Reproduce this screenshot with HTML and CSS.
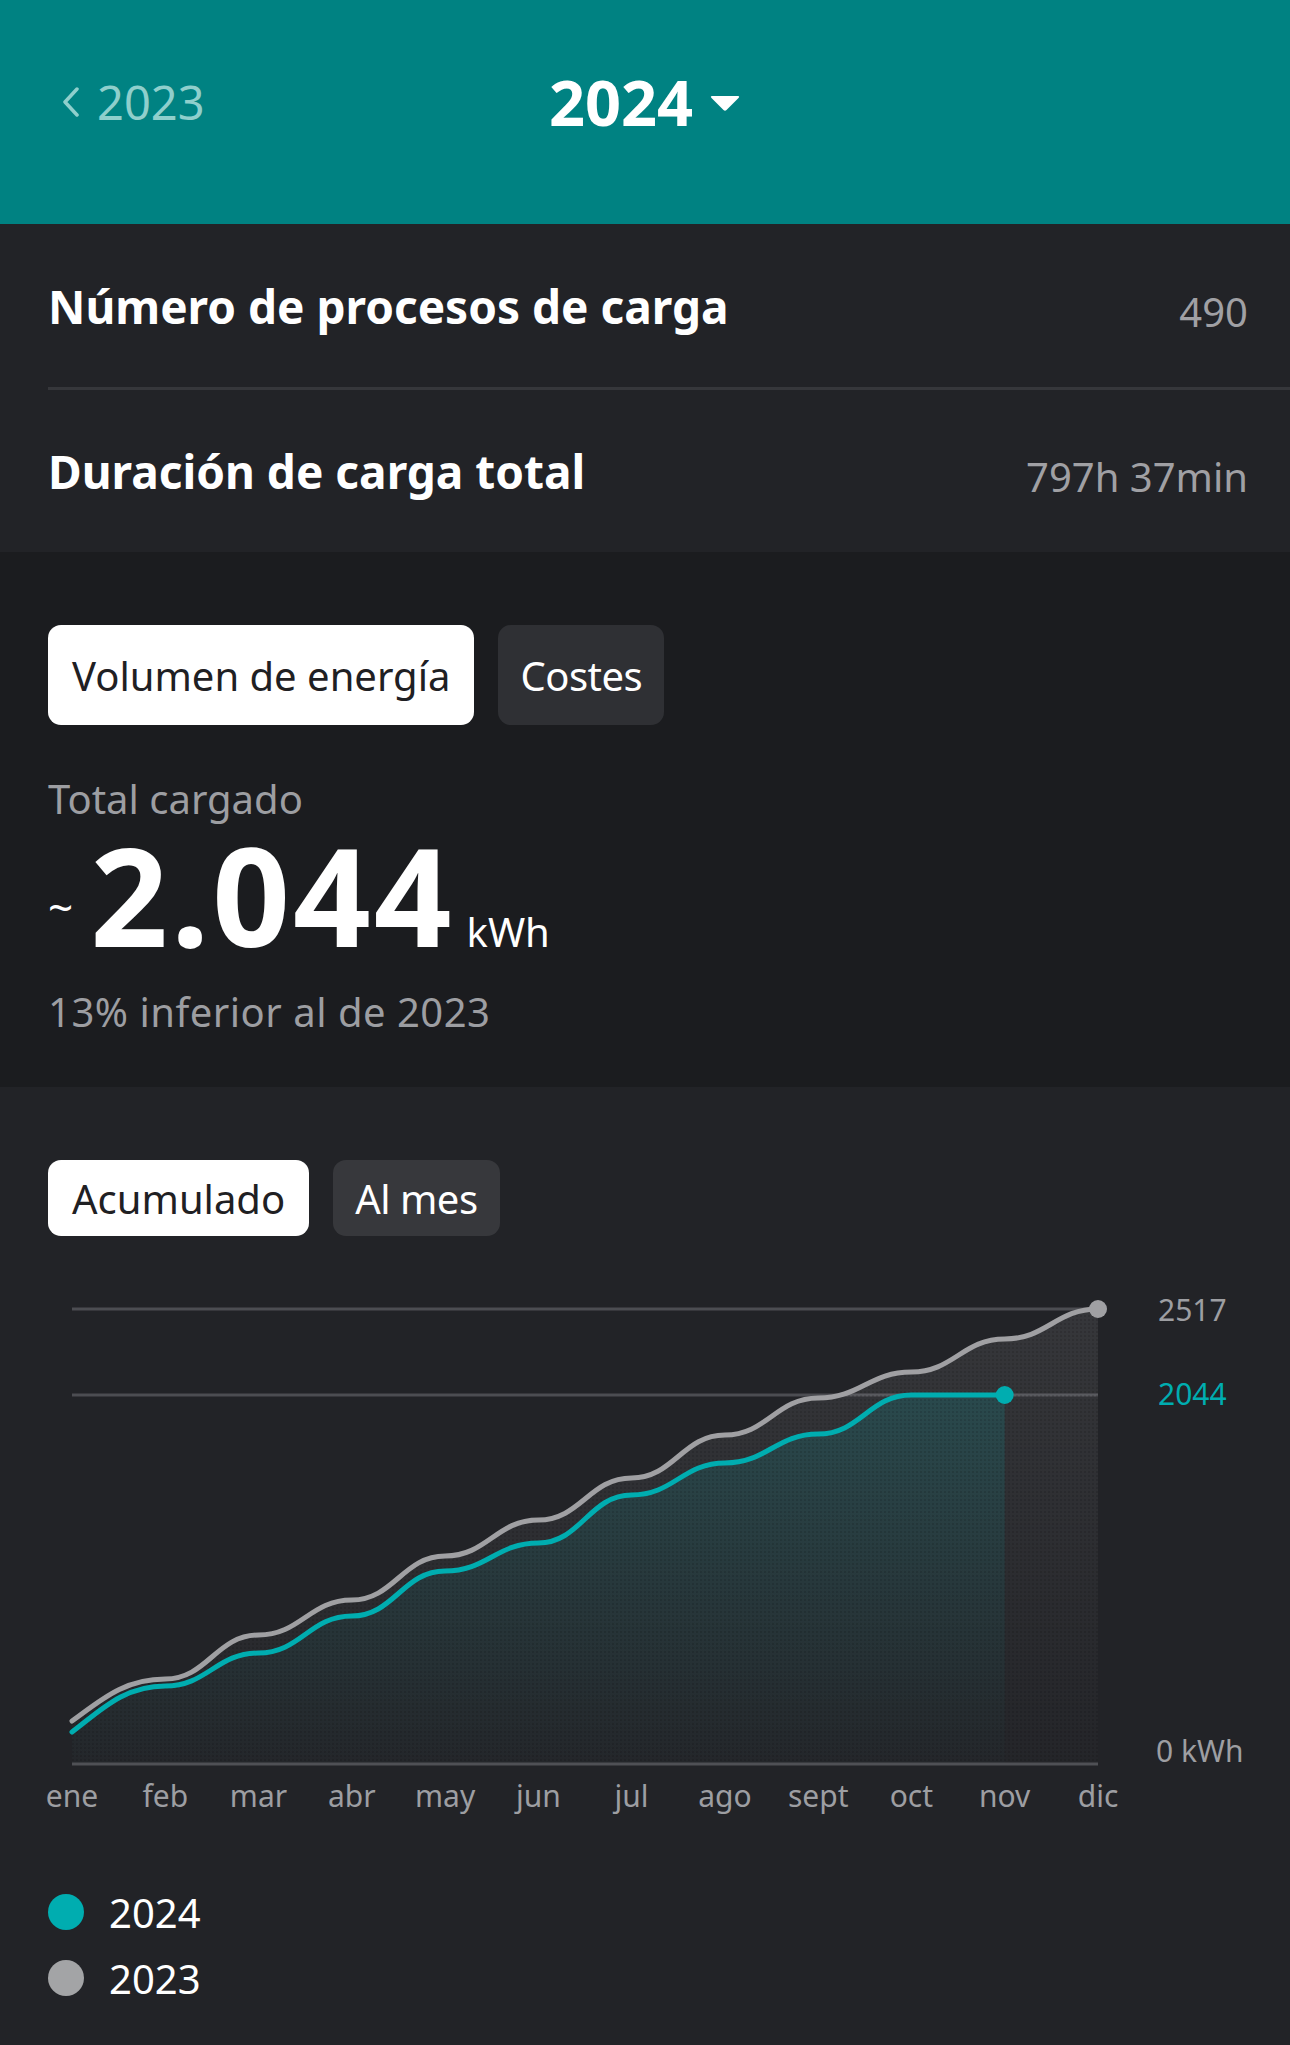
FILE: index.html
```html
<!DOCTYPE HTML>
<html>

<head>
  <meta charset="utf-8">
  <title>Estadísticas de carga</title>
  <link rel="stylesheet" href="styles.css">
</head>

<body>
  <header class="year-bar">
    <a href="javascript:;" class="year-prev">
      <svg class="chevron" width="18" height="30" viewBox="0 0 18 30">
        <path d="M15 2 L3 15 L15 28" fill="none" stroke="#8fcfcc" stroke-width="3.5" stroke-linecap="round" stroke-linejoin="round" />
      </svg>
      2023
    </a>
    <div class="year-current">
      2024
      <svg class="caret" width="32" height="18" viewBox="0 0 32 18">
        <path d="M3 2 H29 Q31 2 29.5 4 L17.5 16 Q16 17.5 14.5 16 L2.5 4 Q1 2 3 2 Z" fill="#fff" />
      </svg>
    </div>
    <div></div>
  </header>

  <section class="stats">
    <div class="stat-row">
      <span class="stat-label">Número de procesos de carga</span>
      <span class="stat-value">490</span>
    </div>
    <div class="stat-divider"></div>
    <div class="stat-row">
      <span class="stat-label">Duración de carga total</span>
      <span class="stat-value">797h 37min</span>
    </div>
  </section>

  <section class="energy">
    <div class="toggle toggle-lg">
      <button class="ac">Volumen de energía</button>
      <button>Costes</button>
    </div>
    <p class="total-label">Total cargado</p>
    <p class="total-value"><span class="approx">~</span><span class="amount">2.044</span><span class="unit">kWh</span></p>
    <p class="total-compare">13% inferior al de 2023</p>
  </section>

  <section class="chart-panel">
    <div class="toggle toggle-sm">
      <button class="ac">Acumulado</button>
      <button>Al mes</button>
    </div>

    <svg class="chart" width="1290" height="560" viewBox="0 1270 1290 560">
      <defs>
        <linearGradient id="fillGrey" x1="0" y1="0" x2="0" y2="1">
          <stop offset="0" stop-color="#ffffff" stop-opacity="0.09" />
          <stop offset="1" stop-color="#ffffff" stop-opacity="0.01" />
        </linearGradient>
        <linearGradient id="fillTeal" x1="0" y1="0" x2="0" y2="1">
          <stop offset="0" stop-color="#00adb0" stop-opacity="0.18" />
          <stop offset="1" stop-color="#00adb0" stop-opacity="0.01" />
        </linearGradient>
        <pattern id="dots" width="4" height="4" patternUnits="userSpaceOnUse">
          <rect width="2" height="2" fill="#000" fill-opacity="0.12" />
        </pattern>
      </defs>

      <!-- rejilla -->
      <line x1="72" y1="1310" x2="1098" y2="1310" class="grid" />
      <line x1="72" y1="1396" x2="1098" y2="1396" class="grid" />

      <!-- areas -->
      <path class="area-grey" d="M72,1722 C100,1702 123.3,1680 165.3,1680 S216.5,1636 258.5,1636 S309.8,1601 351.8,1601 S403.1,1557 445.1,1557 S496.4,1521 538.4,1521 S589.6,1479 631.6,1479 S682.9,1436 724.9,1436 S776.2,1399 818.2,1399 S869.4,1373 911.4,1373 S962.7,1340 1004.7,1340 S1056,1310 1098,1310 L1098,1765 L72,1765 Z" />
      <path class="area-teal" d="M72,1733 C100,1712 123.3,1687 165.3,1687 S216.5,1654 258.5,1654 S309.8,1617 351.8,1617 S403.1,1572 445.1,1572 S496.4,1544 538.4,1544 S589.6,1496 631.6,1496 S682.9,1464 724.9,1464 S776.2,1435 818.2,1435 S869.4,1396 911.4,1396 L1004.7,1396 L1004.7,1765 L72,1765 Z" />
      <path fill="url(#dots)" d="M72,1722 C100,1702 123.3,1680 165.3,1680 S216.5,1636 258.5,1636 S309.8,1601 351.8,1601 S403.1,1557 445.1,1557 S496.4,1521 538.4,1521 S589.6,1479 631.6,1479 S682.9,1436 724.9,1436 S776.2,1399 818.2,1399 S869.4,1373 911.4,1373 S962.7,1340 1004.7,1340 S1056,1310 1098,1310 L1098,1765 L72,1765 Z" />

      <line x1="72" y1="1765" x2="1098" y2="1765" class="grid grid-base" />

      <!-- lineas -->
      <path class="line-grey" d="M72,1722 C100,1702 123.3,1680 165.3,1680 S216.5,1636 258.5,1636 S309.8,1601 351.8,1601 S403.1,1557 445.1,1557 S496.4,1521 538.4,1521 S589.6,1479 631.6,1479 S682.9,1436 724.9,1436 S776.2,1399 818.2,1399 S869.4,1373 911.4,1373 S962.7,1340 1004.7,1340 S1056,1310 1098,1310" />
      <path class="line-teal" d="M72,1733 C100,1712 123.3,1687 165.3,1687 S216.5,1654 258.5,1654 S309.8,1617 351.8,1617 S403.1,1572 445.1,1572 S496.4,1544 538.4,1544 S589.6,1496 631.6,1496 S682.9,1464 724.9,1464 S776.2,1435 818.2,1435 S869.4,1396 911.4,1396 L1004.7,1396" />
      <circle cx="1098" cy="1310" r="9" fill="#a0a0a3" />
      <circle cx="1004.7" cy="1396" r="9" fill="#00adb0" />

      <!-- ejes -->
      <text x="1158" y="1322" class="axis">2517</text>
      <text x="1158" y="1406" class="axis axis-teal">2044</text>
      <text x="1156" y="1763" class="axis">0 kWh</text>

      <g class="months">
        <text x="72" y="1808">ene</text>
        <text x="165.3" y="1808">feb</text>
        <text x="258.5" y="1808">mar</text>
        <text x="351.8" y="1808">abr</text>
        <text x="445.1" y="1808">may</text>
        <text x="538.4" y="1808">jun</text>
        <text x="631.6" y="1808">jul</text>
        <text x="724.9" y="1808">ago</text>
        <text x="818.2" y="1808">sept</text>
        <text x="911.4" y="1808">oct</text>
        <text x="1004.7" y="1808">nov</text>
        <text x="1098" y="1808">dic</text>
      </g>
    </svg>

    <ul class="legend">
      <li><i class="dot dot-teal"></i>2024</li>
      <li><i class="dot dot-grey"></i>2023</li>
    </ul>
  </section>
</body>

</html>
```

FILE: styles.css
```css
* {
  margin: 0;
  padding: 0;
  box-sizing: border-box;
}

body {
  width: 1290px;
  min-height: 2045px;
  background: #222327;
  font-family: "Noto Sans", "Open Sans", sans-serif;
  color: #fff;
}

li {
  list-style: none;
}

/* cabecera con el año */
.year-bar {
  height: 224px;
  padding-bottom: 20px;
  background: #008282;
  display: grid;
  grid-template-columns: 1fr auto 1fr;
  align-items: center;
}

.year-prev {
  padding-left: 62px;
  display: flex;
  align-items: center;
  color: #8fcfcc;
  font-size: 47px;
  line-height: 60px;
  text-decoration: none;
}

.year-prev .chevron {
  margin-right: 17px;
}

.year-current {
  display: flex;
  align-items: center;
  font-size: 63px;
  font-weight: 700;
  line-height: 80px;
}

.year-current .caret {
  margin-left: 16px;
  margin-top: 2px;
}

/* resumen */
.stats {
  background: #222327;
}

.stat-row {
  height: 163px;
  padding: 0 42px 0 48px;
  display: flex;
  justify-content: space-between;
  align-items: center;
}

.stat-row:last-child {
  height: 162px;
}

.stat-label {
  font-size: 46px;
  font-weight: 700;
  line-height: 60px;
}

.stat-value {
  font-size: 40px;
  line-height: 54px;
  color: #a0a0a4;
  margin-top: 12px;
}

.stat-divider {
  height: 3px;
  margin-left: 48px;
  background: #36373b;
}

/* volumen de energia */
.energy {
  background: #1b1c1f;
  padding: 73px 48px 50px;
}

.toggle {
  display: flex;
  gap: 24px;
}

.toggle button {
  font-family: inherit;
  font-size: 40px;
  border: 0;
  border-radius: 13px;
  padding: 0 24px;
  background: #2f3034;
  color: #fff;
  cursor: pointer;
}

.toggle button + button {
  padding: 0 22px;
  letter-spacing: -0.5px;
}

.toggle-lg button {
  height: 100px;
}

.toggle-sm button {
  height: 76px;
  background: #37383c;
}

.toggle button.ac {
  background: #fff;
  color: #1f2023;
}

.total-label {
  margin-top: 49px;
  font-size: 40px;
  line-height: 50px;
  color: #9d9ea2;
}

.total-value {
  margin-top: 5px;
  font-size: 136px;
  font-weight: 700;
  line-height: 132px;
  white-space: nowrap;
}

.total-value .approx {
  font-size: 44px;
  font-weight: 400;
  line-height: 44px;
  vertical-align: 23px;
}

.total-value .amount {
  margin-left: 17px;
  letter-spacing: 3px;
}

.total-value .unit {
  margin-left: 12px;
  font-size: 40px;
  font-weight: 400;
  line-height: 40px;
}

.total-compare {
  margin-top: 26px;
  font-size: 40px;
  line-height: 50px;
  letter-spacing: 0.5px;
  color: #9d9ea2;
}

/* grafico */
.chart-panel {
  background: #222327;
  padding: 73px 0 33px;
}

.chart-panel .toggle {
  padding-left: 48px;
}

.chart {
  display: block;
  margin-top: 33px;
}

.grid {
  stroke: #4c4d52;
  stroke-width: 3;
}

.grid-base {
  stroke: #4f5055;
}

.area-grey {
  fill: url(#fillGrey);
}

.area-teal {
  fill: url(#fillTeal);
}

.line-grey,
.line-teal {
  fill: none;
  stroke-width: 5;
  stroke-linecap: round;
  stroke-linejoin: round;
}

.line-grey {
  stroke: #a0a0a3;
}

.line-teal {
  stroke: #00adb0;
}

.axis {
  font-family: "Noto Sans", sans-serif;
  font-size: 30px;
  fill: #9d9ea2;
}

.axis-teal {
  fill: #00adb0;
}

.months text {
  font-family: "Noto Sans", sans-serif;
  font-size: 30px;
  fill: #9d9ea2;
  text-anchor: middle;
}

.legend {
  margin-top: 50px;
  padding-left: 48px;
}

.legend li {
  height: 66px;
  display: flex;
  align-items: center;
  font-size: 40px;
}

.dot {
  width: 36px;
  height: 36px;
  border-radius: 50%;
  margin-right: 25px;
}

.dot-teal {
  background: #00adb0;
}

.dot-grey {
  background: #a3a4a6;
}
```
